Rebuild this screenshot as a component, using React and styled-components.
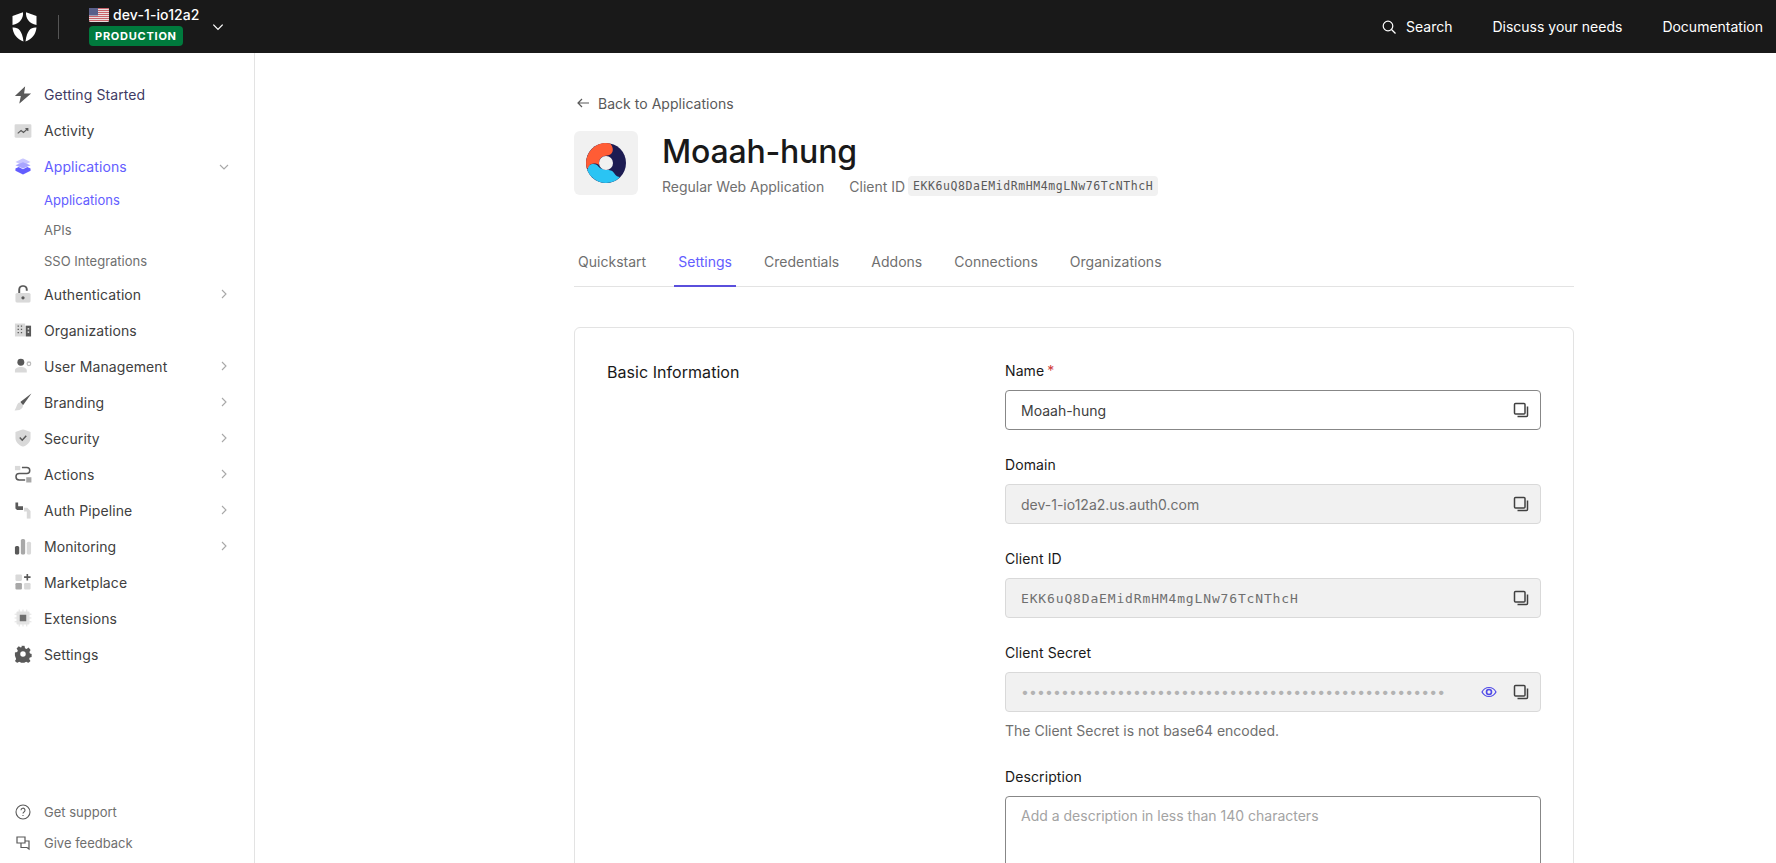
import React from "react";
import styled, { createGlobalStyle } from "styled-components";

const Global = createGlobalStyle`
  html, body { margin: 0; padding: 0; height: 100%; overflow: hidden; background: #fff; }
  body { font-family: Inter, "Noto Sans", sans-serif; color: #191919; }
  * { box-sizing: border-box; }
`;

const Page = styled.div`height: 863px; display: flex; flex-direction: column; overflow: hidden;`;
const Header = styled.header`
  height: 53px; flex: none; background: #191919; color: #fff; display: flex; align-items: center; padding: 0 13px 0 12px;
`;
const Logo = styled.svg`width: 25px; height: 30px; flex: none;`;
const Divider = styled.div`width: 1px; height: 24px; background: #555; margin: 0 30px 0 21px;`;
const Tenant = styled.div`display: flex; flex-direction: column; gap: 3px; align-items: flex-start; width: 122px;`;
const TenantName = styled.div`display: flex; align-items: center; gap: 4px; font-size: 14px; font-weight: 500; line-height: 16px; color: #fff; letter-spacing: .1px;`;
const Badge = styled.span`
  background: #007a3d; color: #fff; border-radius: 4px; font-size: 11px; font-weight: 700; letter-spacing: .75px;
  line-height: 20px; height: 20px; padding: 0 6px;
`;
const HeaderRight = styled.nav`margin-left: auto; display: flex; align-items: center; gap: 40px; font-size: 14px; font-weight: 400; color: #fff;`;
const SearchLink = styled.span`display: flex; align-items: center; gap: 10px;`;

const Body = styled.div`flex: 1; display: flex; min-height: 0;`;
const Sidebar = styled.aside`
  width: 255px; flex: none; border-right: 1px solid #e3e3e3; padding: 23.5px 0 0 15px; display: flex; flex-direction: column;
`;
const Row = styled.div`
  height: 36px; display: flex; align-items: center; gap: 13px; font-size: 14px; font-weight: 400; letter-spacing: .1px; padding-right: 24px;
  color: ${p => p.$active ? "#635dff" : p.$dark ? "#3f3b64" : "#404040"};
`;
const IconBox = styled.span`width: 16px; height: 16px; flex: none; display: flex; align-items: center; justify-content: center; transform: scale(1.08);`;
const Label = styled.span`flex: 1;`;
const Sub = styled.div`
  height: 30.5px; display: flex; align-items: center; padding-left: 29px; font-size: 13px; font-weight: 400;
  color: ${p => p.$active ? "#635dff" : "#6f6f6f"};
`;
const SidebarFoot = styled.div`margin-top: auto; padding-bottom: 5px; display: flex; flex-direction: column;`;
const FootRow = styled.div`height: 31px; display: flex; align-items: center; gap: 13px; font-size: 13px; color: #6f6f6f;`;

const Main = styled.main`flex: 1; padding: 40px 0 0 319px; overflow: hidden;`;
const Content = styled.div`width: 1000px;`;
const Back = styled.div`display: flex; align-items: center; gap: 8px; font-size: 14px; letter-spacing: .03px; color: #595959; height: 20px; margin-left: 2px;`;
const Head = styled.div`display: flex; gap: 24px; margin-top: 18px; height: 64px;`;
const AppIcon = styled.div`width: 64px; height: 64px; border-radius: 6px; background: #f1f1f1; display: flex; align-items: center; justify-content: center;`;
const HeadText = styled.div`display: flex; flex-direction: column; padding-top: 1px;`;
const Title = styled.h1`margin: 0; font-size: 32px; font-weight: 500; line-height: 40px; color: #191919; letter-spacing: -.2px;`;
const Meta = styled.div`display: flex; align-items: center; font-size: 14px; color: #6f6f6f; margin-top: 4px; height: 20px;`;
const MetaGap = styled.span`margin-right: 25px;`;
const MetaCode = styled.code`
  margin-left: 3px; background: #f1f1f1; border-radius: 4px; padding: 0 5px; font-family: "DejaVu Sans Mono", monospace; font-size: 11.5px; letter-spacing: .58px; line-height: 20px; color: #595959;
`;
const Tabs = styled.div`display: flex; gap: 24px; margin-top: 49px; height: 43px; border-bottom: 1px solid #e3e3e3;`;
const Tab = styled.div`
  padding: 0 4px; height: 43px; line-height: 36px; font-size: 14px; letter-spacing: .02px; color: ${p => p.$active ? "#635dff" : "#6f6f6f"};
  border-bottom: 2px solid ${p => p.$active ? "#5a4fdc" : "transparent"};
`;
const Card = styled.section`
  margin-top: 40px; border: 1px solid #e3e3e3; border-radius: 6px 6px 0 0; padding: 33px 32px 0; display: grid; grid-template-columns: 398px 536px; height: 600px;
`;
const CardTitle = styled.h2`margin: 1px 0 0; font-size: 16px; font-weight: 400; letter-spacing: .05px; line-height: 20px; color: #191919;`;
const Fields = styled.div`display: flex; flex-direction: column;`;
const Field = styled.div`margin-bottom: 25px;`;
const FieldLabel = styled.div`font-size: 14px; font-weight: 400; letter-spacing: .1px; line-height: 20px; color: #191919; margin-bottom: 9px;`;
const Star = styled.span`color: #d03c38; margin-left: 3px;`;
const InputBox = styled.div`
  height: 40px; border-radius: 4px; display: flex; align-items: center; padding: 0 11px 0 15px; gap: 16px; font-size: 14px;
  background: ${p => p.$disabled ? "#f1f1f1" : "#fff"};
  border: 1px solid ${p => p.$disabled ? "#d9d9d9" : "#878787"};
  color: ${p => p.$disabled ? "#6f6f6f" : "#404040"};
`;
const Value = styled.span`flex: 1; ${p => p.$mono ? `font-family: "DejaVu Sans Mono", monospace; font-size: 13px; letter-spacing: .85px;` : ""}`;
const Dots = styled.span`flex: 1; color: #b3b3b3; font-size: 14px; letter-spacing: .13px; overflow: hidden; white-space: nowrap; line-height: 20px;`;
const Hint = styled.div`font-size: 14px; color: #6f6f6f; line-height: 20px; margin: 9px 0 1px;`;
const TextArea = styled.div`height: 100px; border: 1px solid #878787; border-radius: 4px; padding: 9px 15px; font-size: 14px; color: #a3a3a3; line-height: 20px;`;

const Copy = () => (
  <svg width="16" height="16" viewBox="0 0 16 16" fill="none">
    <rect x="1.5" y="1.5" width="10.5" height="10.5" rx="1" stroke="#404040" strokeWidth="1.5" />
    <path d="M14.5 4.5v9a1 1 0 0 1-1 1h-9" stroke="#404040" strokeWidth="1.5" />
  </svg>
);
const Eye = () => (
  <svg width="16" height="16" viewBox="0 0 16 16" fill="none" stroke="#4f49e8" strokeWidth="1.2">
    <path d="M1 8c1.600-3 4-4.500 7-4.500S13.400 5 15 8c-1.600 3-4 4.500-7 4.500S2.600 11 1 8z" />
    <circle cx="8" cy="8" r="2.500" strokeWidth="1.600" />
  </svg>
);
const Chev = ({ down, color = "#a8a8a8", size = 12 }) => (
  <svg width={size} height={size} viewBox="0 0 12 12" fill="none" stroke={color} strokeWidth="1.1">
    {down ? <path d="M2 4l4 4 4-4" /> : <path d="M4 2l4 4-4 4" />}
  </svg>
);

const S = (p) => <svg width="16" height="16" viewBox="0 0 16 16" {...p} />;
const icons = {
  bolt: <S><path d="M10 0L0.500 9h5.500L4.500 16 15.500 6.500H9z" fill="#595959" /></S>,
  activity: <svg width="18" height="14" viewBox="0 0 18 14"><rect width="18" height="14" rx="1.500" fill="#d9d9d9" /><path d="M3.500 9.500l3.500-3 2.500 2 4.500-4M11.500 4.500H14V7" stroke="#595959" strokeWidth="1.200" fill="none" /></svg>,
  apps: <S><path d="M8 0l7 3.300-7 3.300-7-3.300z" fill="#c9c7ff" /><path d="M1 6.300L8 3.500l7 2.800L8 9.500z" fill="#a8a5ff" /><path d="M1 9.500L4 8l4 2 4-2 3 1.500v2L8 15l-7-3.500z" fill="#635dff" /></S>,
  auth: <S><rect x="1" y="7" width="14" height="9" rx="1.500" fill="#d9d9d9" /><path d="M4.500 7V4a3.500 3.500 0 0 1 7 0v1" stroke="#595959" strokeWidth="1.800" fill="none" /><circle cx="8" cy="11.500" r="1.500" fill="#595959" /></S>,
  org: <S><rect x="0.500" y="2" width="9.500" height="12" fill="#d9d9d9" /><rect x="10.500" y="4" width="5" height="10" fill="#595959" /><path d="M3 4.500h1.200M6 4.500h1.200M3 7.500h1.200M6 7.500h1.200M3 10.500h1.200M6 10.500h1.200" stroke="#595959" strokeWidth="1.200" /><path d="M12.300 7h1.400M12.300 10h1.400" stroke="#fff" strokeWidth="1.200" /></S>,
  users: <S><circle cx="6" cy="4.500" r="3.200" fill="#595959" /><path d="M0.500 14v-1.500C0.500 10 3 9 6 9s5.500 1 5.500 3.500V14z" fill="#d9d9d9" /><circle cx="13.500" cy="6" r="1.700" fill="none" stroke="#bdbdbd" strokeWidth="1.200" /></S>,
  brand: <S><path d="M16 0L5.500 8l2.500 3z" fill="#595959" /><path d="M5 8.500C2 9 2.500 13 0 16c5 0 8-1.500 8-5z" fill="#d9d9d9" /></S>,
  security: <S><path d="M8 0l7 2.500V8c0 4-3.500 7-7 8-3.500-1-7-4-7-8V2.500z" fill="#d9d9d9" /><path d="M5 7.500L7.300 10 11 6" stroke="#595959" strokeWidth="1.400" fill="none" /></S>,
  actions: <S><rect x="0.500" y="0.500" width="5" height="4" fill="#d9d9d9" /><rect x="11" y="11" width="5" height="5" fill="#a8a8a8" /><path d="M7 2h4.500a2.500 2.500 0 0 1 0 5.500h-7a2.800 2.800 0 0 0 0 6H10" stroke="#595959" strokeWidth="1.400" fill="none" /></S>,
  pipe: <S><path d="M1 1h2.500v3.500H8V8H2.500L1 6.500z" fill="#595959" /><path d="M9 6h3l3 3v7h-3.500V9.500H9z" fill="#d9d9d9" /></S>,
  monitor: <S><rect x="0.500" y="8" width="4" height="8" rx="1.500" fill="#595959" /><rect x="6" y="1.500" width="4" height="14.500" rx="1.500" fill="#a8a8a8" /><rect x="11.500" y="4" width="4" height="12" rx="1.500" fill="#d9d9d9" /></S>,
  market: <S><rect x="1" y="1" width="6" height="6" rx="1" fill="#d9d9d9" /><rect x="1" y="9" width="6" height="6" rx="1" fill="#a8a8a8" /><rect x="9" y="9" width="6" height="6" rx="1" fill="#d9d9d9" /><path d="M12 0.500v6M9 3.500h6" stroke="#595959" strokeWidth="1.500" /></S>,
  ext: <S><path d="M4.500 0v16M8 0v16M11.500 0v16M0 4.500h16M0 8h16M0 11.500h16" stroke="#d9d9d9" strokeWidth=".7" /><rect x="2" y="2" width="12" height="12" rx="1" fill="#e3e3e3" /><rect x="5" y="5" width="6" height="6" fill="#6f6f6f" /></S>,
  gear: <S><path fillRule="evenodd" clipRule="evenodd" fill="#595959" d="M6.500 0h3l.5 2.300 1.500.7 2-1.300 2 2.300-1.200 2 .6 1.500 2.100.5v3l-2.300.4-.6 1.500 1.300 2-2.200 2.100-2-1.300-1.500.6-.5 2.200h-3l-.4-2.200-1.600-.6-1.900 1.300-2.200-2.100 1.200-2-.6-1.500L0 9.500v-3l2.300-.5.600-1.500L1.700 2.700 3.800.4l2 1.300 1-.7zM8 5.300a2.700 2.700 0 1 0 0 5.400 2.700 2.700 0 0 0 0-5.400z" transform="scale(.94) translate(.5 .5)" /></S>,
};

const navTop = [
  ["bolt", "Getting Started", null, true],
  ["activity", "Activity"],
];
const navBottom = [
  ["auth", "Authentication", "r"],
  ["org", "Organizations"],
  ["users", "User Management", "r"],
  ["brand", "Branding", "r"],
  ["security", "Security", "r"],
  ["actions", "Actions", "r"],
  ["pipe", "Auth Pipeline", "r"],
  ["monitor", "Monitoring", "r"],
  ["market", "Marketplace"],
  ["ext", "Extensions"],
  ["gear", "Settings"],
];
const NavRow = ({ icon, label, chev, dark, active }) => (
  <Row $dark={dark} $active={active}>
    <IconBox>{icons[icon]}</IconBox>
    <Label>{label}</Label>
    {chev === "r" && <Chev />}
    {chev === "d" && <Chev down />}
  </Row>
);

const Flag = () => (
  <svg width="20" height="14" viewBox="0 0 20 14">
    <rect width="20" height="14" rx="1.500" fill="#eee" />
    {[0, 2, 4, 6, 8, 10, 12].map(y => <rect key={y} y={y} width="20" height="1.100" fill="#c9636a" />)}
    <rect width="9" height="7.500" fill="#5a5f8a" />
  </svg>
);

const tabs = ["Quickstart", "Settings", "Credentials", "Addons", "Connections", "Organizations"];

export default function App() {
  return (
    <Page>
      <Global />
      <Header>
        <Logo viewBox="0 0 25 30">
          <path fill="#fff" d="M0.500 4L11 0.300C11.500 6 8 12 0.500 13z" />
          <path fill="#fff" d="M24.500 4L14 0.300C13.500 6 17 12 24.500 13z" />
          <path fill="#fff" d="M0.500 15.500C6 15 10 18 11.500 29.500 5 27 1 22 0.500 15.500z" />
          <path fill="#fff" d="M24.500 15.500C19 15 15 18 13.500 29.500 20 27 24 22 24.500 15.500z" />
        </Logo>
        <Divider />
        <Tenant>
          <TenantName><Flag />dev-1-io12a2</TenantName>
          <Badge>PRODUCTION</Badge>
        </Tenant>
        <Chev down color="#fff" size={14} />
        <HeaderRight>
          <SearchLink>
            <svg width="14" height="14" viewBox="0 0 14 14" fill="none" stroke="#fff" strokeWidth="1.200"><circle cx="6" cy="6" r="4.800" /><path d="M9.500 9.500L13.500 13.500" /></svg>
            Search
          </SearchLink>
          <span>Discuss your needs</span>
          <span>Documentation</span>
        </HeaderRight>
      </Header>
      <Body>
        <Sidebar>
          {navTop.map(([i, l, c, d]) => <NavRow key={l} icon={i} label={l} chev={c} dark={d} />)}
          <NavRow icon="apps" label="Applications" chev="d" active />
          <Sub $active>Applications</Sub>
          <Sub>APIs</Sub>
          <Sub>SSO Integrations</Sub>
          {navBottom.map(([i, l, c]) => <NavRow key={l} icon={i} label={l} chev={c} />)}
          <SidebarFoot>
            <FootRow>
              <svg width="16" height="16" viewBox="0 0 16 16" fill="none" stroke="#595959" strokeWidth="1.100"><circle cx="8" cy="8" r="7" /><path d="M6 6.200a2 2 0 1 1 3 1.700c-.7.400-1 .8-1 1.600M8 11v1" /></svg>
              Get support
            </FootRow>
            <FootRow>
              <svg width="16" height="16" viewBox="0 0 16 16" fill="none" stroke="#595959" strokeWidth="1.200"><path d="M2 2h8v6H2z" /><path d="M6 8v4.500h6l2 1.500V6h-4" /></svg>
              Give feedback
            </FootRow>
          </SidebarFoot>
        </Sidebar>
        <Main>
          <Content>
            <Back>
              <svg width="14" height="14" viewBox="0 0 14 14" fill="none" stroke="#595959" strokeWidth="1.200"><path d="M13 7H2M6 3L2 7l4 4" /></svg>
              <span>Back to Applications</span>
            </Back>
            <Head>
              <AppIcon>
                <svg width="40" height="40" viewBox="0 0 40 40">
                  <circle cx="20" cy="20" r="20" fill="#1d1c52" />
                  <path fill="#2ac4f4" d="M2 26C1 21 8 20 11 22C13 24 14 26 20 27C24 27 26 27 28 30C30 33 32 34 34 34A20 20 0 0 1 20 40A20 20 0 0 1 1 26Z" />
                  <path fill="#ff5c35" d="M24 0.400C27 3 28 8 25 11C23 13 19 12 16 14C13 16 13 19 13 22C10 20 5 20 3 23C2.500 24 2 25 1 26A20 20 0 0 1 24 0.400Z" />
                  <circle cx="20" cy="20" r="7" fill="#f1f1f1" />
                </svg>
              </AppIcon>
              <HeadText>
                <Title>Moaah-hung</Title>
                <Meta>
                  <MetaGap>Regular Web Application</MetaGap>
                  <span>Client ID</span>
                  <MetaCode>EKK6uQ8DaEMidRmHM4mgLNw76TcNThcH</MetaCode>
                </Meta>
              </HeadText>
            </Head>
            <Tabs>
              {tabs.map(t => <Tab key={t} $active={t === "Settings"}>{t}</Tab>)}
            </Tabs>
            <Card>
              <CardTitle>Basic Information</CardTitle>
              <Fields>
                <Field>
                  <FieldLabel>Name<Star>*</Star></FieldLabel>
                  <InputBox><Value>Moaah-hung</Value><Copy /></InputBox>
                </Field>
                <Field>
                  <FieldLabel>Domain</FieldLabel>
                  <InputBox $disabled><Value>dev-1-io12a2.us.auth0.com</Value><Copy /></InputBox>
                </Field>
                <Field>
                  <FieldLabel>Client ID</FieldLabel>
                  <InputBox $disabled><Value $mono>EKK6uQ8DaEMidRmHM4mgLNw76TcNThcH</Value><Copy /></InputBox>
                </Field>
                <Field>
                  <FieldLabel>Client Secret</FieldLabel>
                  <InputBox $disabled><Dots>{"•".repeat(53)}</Dots><Eye /><Copy /></InputBox>
                  <Hint>The Client Secret is not base64 encoded.</Hint>
                </Field>
                <Field>
                  <FieldLabel>Description</FieldLabel>
                  <TextArea>Add a description in less than 140 characters</TextArea>
                </Field>
              </Fields>
            </Card>
          </Content>
        </Main>
      </Body>
    </Page>
  );
}
